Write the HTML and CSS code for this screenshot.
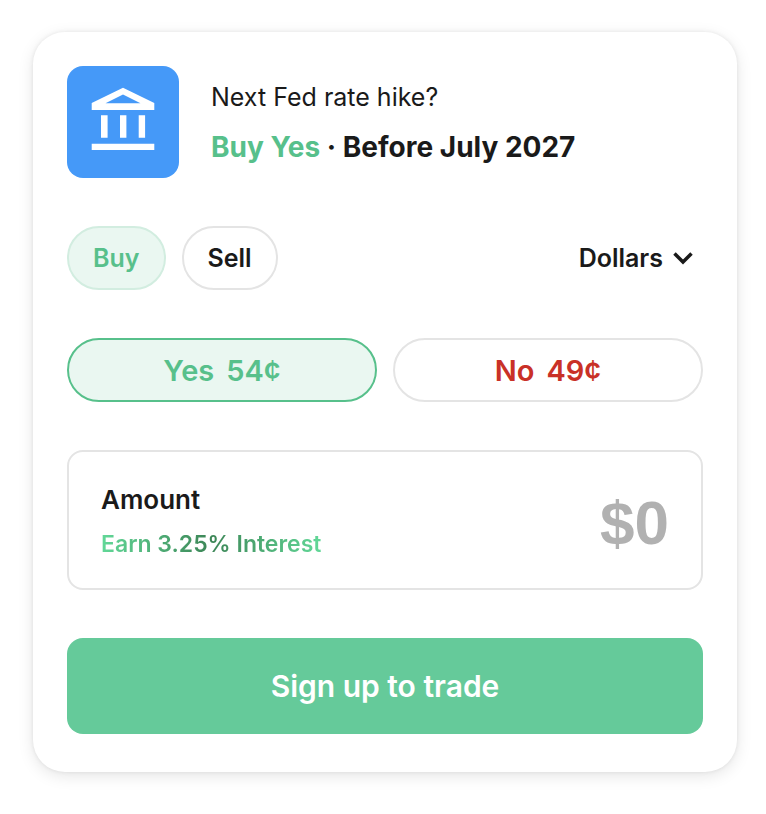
FILE: index.html
```html
<!DOCTYPE html>
<html lang="en">
<head>
  <meta charset="UTF-8">
  <meta name="viewport" content="width=device-width, initial-scale=1">
  <title>Next Fed rate hike?</title>
  <link rel="stylesheet" href="styles.css">
</head>
<body>
  <form class="card">
    <header class="market">
      <svg class="market-icon" viewBox="0 0 112 112" aria-hidden="true">
        <rect width="112" height="112" fill="#4599f8"/>
        <path fill="#fff" fill-rule="evenodd" d="M56 21.700 87.300 37V44H24.700V37ZM56 28.500 38.500 37.300H73.500Z"/>
        <path fill="#fff" d="M34 49.300h6.600v22.400H34zM53 49.300h6.400v22.400H53zM71.700 49.300h6.400v22.400h-6.400zM24.700 77.700h62.600V84H24.700z"/>
      </svg>
      <div class="market-text">
        <p class="question">Next Fed rate hike?</p>
        <h1 class="choice"><span class="side">Buy Yes</span> · Before July 2027</h1>
      </div>
    </header>

    <div class="order-row">
      <button type="button" class="pill active">Buy</button>
      <button type="button" class="pill">Sell</button>
      <div class="unit">
        <select class="unit-select" aria-label="Order unit">
          <option>Dollars</option>
          <option>Contracts</option>
        </select>
        <svg class="chevron" viewBox="0 0 20 14" aria-hidden="true">
          <path d="M1.500 2.500l8.500 8.500 8.500-8.500" fill="none" stroke="#1a1a1a" stroke-width="3.500"/>
        </svg>
      </div>
    </div>

    <div class="outcomes">
      <button type="button" class="outcome yes"><span>Yes</span><span>54¢</span></button>
      <button type="button" class="outcome no"><span>No</span><span>49¢</span></button>
    </div>

    <div class="amount">
      <div class="amount-text">
        <label class="amount-label" for="amount">Amount</label>
        <span class="interest">Earn 3.25% Interest</span>
      </div>
      <input class="amount-input" type="text" inputmode="numeric" id="amount" placeholder="$0">
    </div>

    <button type="submit" class="submit">Sign up to trade</button>
  </form>
</body>
</html>
```

FILE: styles.css
```css
* { box-sizing: border-box; }
body {
  font-family: Inter, "Liberation Sans", sans-serif;
  background: #fff;
  color: #1a1a1a;
  margin: 0;
  padding: 32px 29px 42px 33px;
}
button, select, input {
  font-family: inherit;
  color: inherit;
}
button { cursor: pointer; }
.card {
  display: flex;
  flex-direction: column;
  gap: 48px;
  padding: 34px 34px 38px;
  border-radius: 32px;
  background: #fff;
  box-shadow: 0 0 4px rgba(0,0,0,0.08), 0 4px 16px rgba(0,0,0,0.1);
}
.market {
  display: flex;
  align-items: center;
  gap: 32px;
}
.market-icon {
  flex: none;
  width: 112px;
  height: 112px;
  border-radius: 16px;
}
.market-text { padding-top: 2px; }
.question {
  margin: 0 0 12px;
  font-size: 25px;
  line-height: 36px;
}
.choice {
  margin: 0;
  font-size: 28px;
  line-height: 40px;
  font-weight: 700;
}
.side { color: #57c08b; }
.order-row {
  display: flex;
  align-items: center;
  gap: 16px;
}
.pill {
  height: 64px;
  padding: 0 24px;
  border: 2px solid #e4e4e4;
  border-radius: 32px;
  background: #fff;
  font-size: 25px;
  font-weight: 600;
}
.pill.active {
  border-color: #d2ede0;
  background: #eaf7f1;
  color: #57c08b;
}
.unit {
  display: flex;
  position: relative;
  align-items: center;
  margin-left: auto;
}
.unit-select {
  appearance: none;
  border: none;
  background: none;
  padding: 0 40px 0 0;
  font-size: 25px;
  line-height: 36px;
  font-weight: 600;
  cursor: pointer;
  field-sizing: content;
}
.chevron {
  position: absolute;
  right: 10px;
  width: 20px;
  height: 14px;
  pointer-events: none;
}
.outcomes {
  display: grid;
  grid-template-columns: 1fr 1fr;
  gap: 16px;
}
.outcome {
  display: flex;
  justify-content: center;
  align-items: center;
  gap: 12px;
  height: 64px;
  border: 2px solid #e4e4e4;
  border-radius: 32px;
  background: #fff;
  font-size: 29px;
  font-weight: 600;
}
.outcome.yes {
  border-color: #57c08b;
  background: #eaf7f1;
  color: #57c08b;
}
.outcome.no { color: #c93127; }
.amount {
  display: flex;
  justify-content: space-between;
  align-items: center;
  height: 140px;
  padding: 4px 32px 0;
  border: 2px solid #e4e4e4;
  border-radius: 16px;
}
.amount-text {
  display: flex;
  flex-direction: column;
  align-items: flex-start;
  gap: 8px;
}
.amount-label {
  font-size: 26px;
  line-height: 36px;
  font-weight: 600;
}
.interest {
  font-size: 23px;
  line-height: 36px;
  font-weight: 600;
  background: linear-gradient(90deg, #62d898, #3c8556, #62d898);
  background-clip: text;
  color: transparent;
}
.amount-input {
  flex: 1;
  min-width: 0;
  padding: 0;
  border: none;
  outline: none;
  background: none;
  font-family: "Liberation Sans", sans-serif;
  font-size: 62px;
  font-weight: 700;
  text-align: right;
}
.amount-input::placeholder { color: #b1b1b1; }
.submit {
  height: 96px;
  border: none;
  border-radius: 16px;
  background: #65ca9a;
  color: #fff;
  font-size: 30px;
  font-weight: 600;
}
```
